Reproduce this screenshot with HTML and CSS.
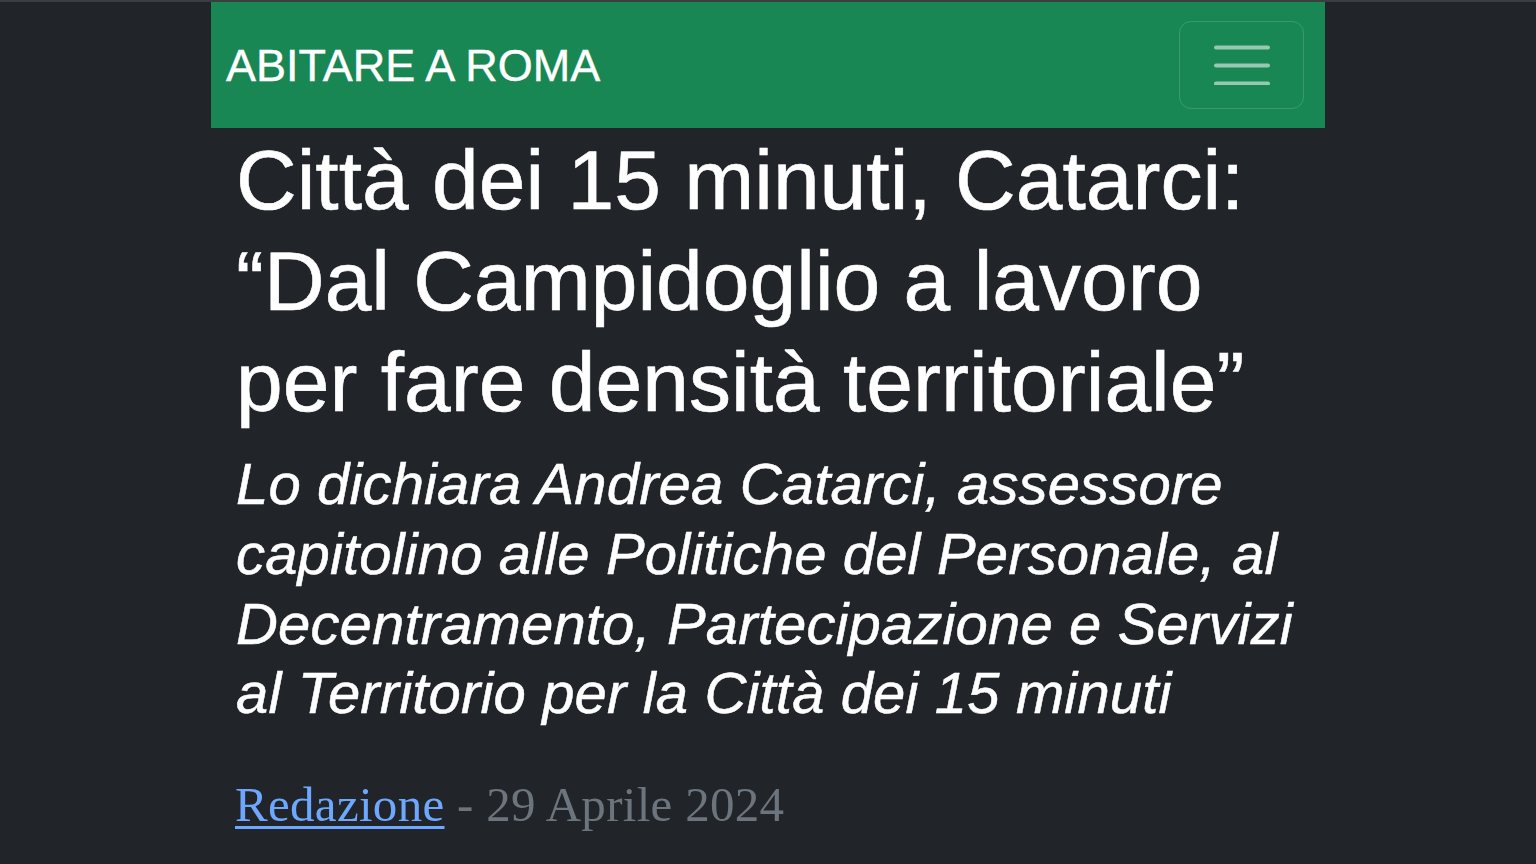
FILE: index.html
```html
<!DOCTYPE html>
<html lang="it">
<head>
<meta charset="utf-8">
<title>Abitare a Roma</title>
<link rel="stylesheet" href="styles.css">
</head>
<body>
<div class="topline"></div>
<div class="page">
  <nav class="navbar">
    <a class="brand" href="#">ABITARE A ROMA</a>
    <button class="toggler" type="button" aria-label="Menu">
      <svg width="56" height="40" viewBox="0 0 56 40" aria-hidden="true">
        <path d="M2 2.5H54M2 20.5H54M2 38.5H54" stroke="rgba(255,255,255,0.55)" stroke-width="4" stroke-linecap="round" fill="none"/>
      </svg>
    </button>
  </nav>
  <article class="article">
    <h1 class="title">Città dei 15 minuti, Catarci: “Dal Campidoglio a lavoro per fare densità territoriale”</h1>
    <p class="lead">Lo dichiara Andrea Catarci, assessore capitolino alle Politiche del Personale, al Decentramento, Partecipazione e Servizi al Territorio per la Città dei 15 minuti</p>
    <p class="byline"><a class="author" href="#">Redazione</a> - 29 Aprile 2024</p>
  </article>
</div>
</body>
</html>
```

FILE: styles.css
```css
html, body {
  margin: 0;
  padding: 0;
  background: #212529;
}

body {
  font-family: "Liberation Sans", Arial, Helvetica, sans-serif;
  color: #ffffff;
}

.topline {
  height: 2px;
  background: #3b3e41;
}

.page {
  width: 1114px;
  margin: 0 auto;
}

.navbar {
  height: 126px;
  background: #198754;
  display: flex;
  align-items: center;
  justify-content: space-between;
  padding: 0 21px 0 15px;
  box-sizing: border-box;
}

.brand {
  color: #ffffff;
  text-decoration: none;
  font-size: 45px;
  line-height: 1;
  -webkit-text-stroke: 0.4px #ffffff;
}

.toggler {
  width: 125px;
  height: 88px;
  box-sizing: border-box;
  border: 1.5px solid rgba(255, 255, 255, 0.15);
  border-radius: 12px;
  background: transparent;
  display: flex;
  align-items: center;
  justify-content: center;
  padding: 0;
}

.toggler svg {
  display: block;
}

.article {
  padding: 2px 18px 0 25px;
}

.title {
  margin: 0 0 17px 0;
  font-size: 84px;
  line-height: 1.2;
  font-weight: 400;
  -webkit-text-stroke: 0.6px #ffffff;
}

.lead {
  margin: 0 0 40px 0;
  font-size: 58px;
  line-height: 1.2;
  font-style: italic;
  letter-spacing: 0.15px;
  -webkit-text-stroke: 0.5px #ffffff;
}

.byline {
  margin: 0;
  font-family: "Liberation Serif", Georgia, "Times New Roman", serif;
  font-size: 49px;
  letter-spacing: 0.3px;
  line-height: 1.5;
  color: #6c757d;
  margin-left: -1px;
}

.author {
  color: #6ea8fe;
  text-decoration: underline;
  text-decoration-thickness: 3px;
  text-underline-offset: 5px;
}
```
